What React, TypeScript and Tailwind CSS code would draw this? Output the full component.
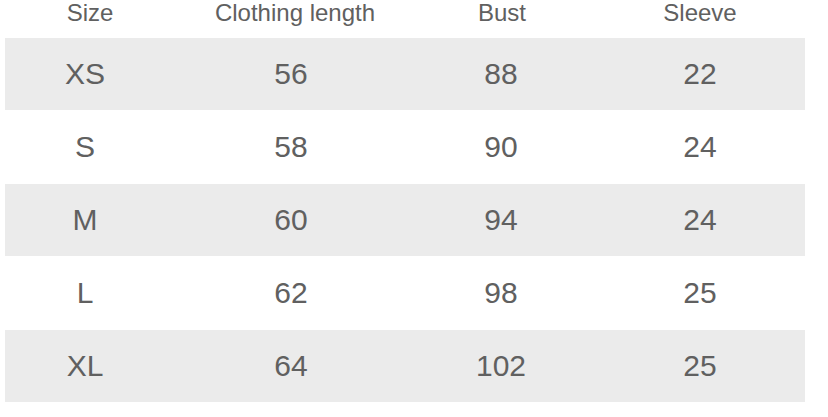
const rows = [
  ["XS", "56", "88", "22"],
  ["S", "58", "90", "24"],
  ["M", "60", "94", "24"],
  ["L", "62", "98", "25"],
  ["XL", "64", "102", "25"],
];

export default function App() {
  return (
    <main
      className="w-[828px] h-[417px] bg-white overflow-hidden pl-[5px] text-[#606060]"
      style={{ fontFamily: '"Liberation Sans", Arial, sans-serif' }}
    >
      <div className="w-[800px] h-[38px] grid grid-cols-[170px_240px_174px_222px] text-[24px] leading-[26px] text-center">
        <div>Size</div>
        <div>Clothing length</div>
        <div>Bust</div>
        <div>Sleeve</div>
      </div>
      {rows.map((r, i) => (
        <div
          key={r[0]}
          className={`w-[800px] grid grid-cols-[160px_252px_168px_230px] items-center text-center text-[30px] leading-none ${
            i % 2 === 0 ? "h-[72px] bg-[#ebebeb]" : "h-[74px] bg-white"
          }`}
        >
          {r.map((c, j) => (
            <div key={j}>{c}</div>
          ))}
        </div>
      ))}
    </main>
  );
}
